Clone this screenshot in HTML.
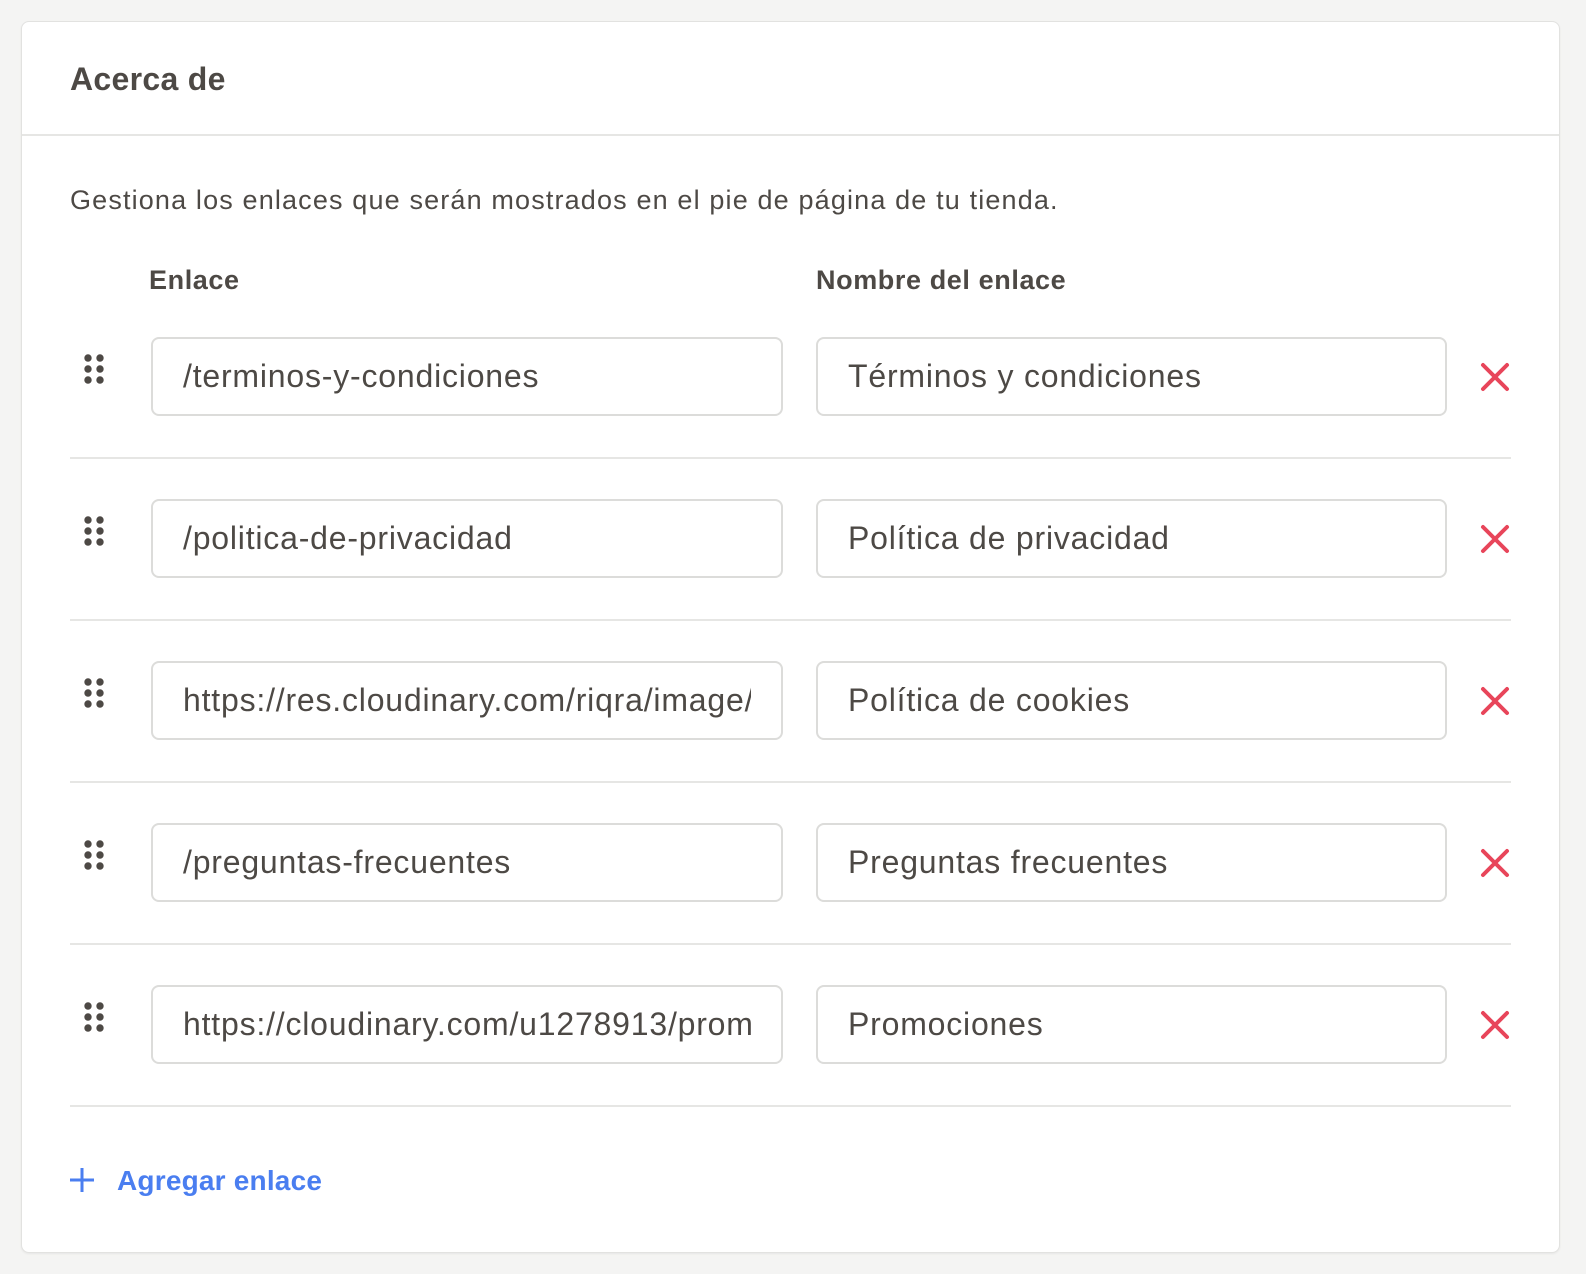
<!DOCTYPE html><html><head><style>
body{margin:0;background:#f4f4f3;font-family:"Liberation Sans",sans-serif;color:#4d4945}
.card{position:absolute;left:21px;top:21px;width:1537px;height:1230px;background:#fff;border:1px solid #e2e2e0;border-radius:8px;box-shadow:0 1px 2px rgba(0,0,0,.06)}
.h{position:absolute;left:48px;top:37px;font-size:32px;font-weight:bold;line-height:40px;letter-spacing:0.3px}
.hl{position:absolute;left:0;right:0;top:112px;border-top:2px solid #e6e6e4}
.d{position:absolute;left:48px;top:161px;font-size:27px;line-height:34px;letter-spacing:1.15px}
.lb{position:absolute;top:241px;font-size:27px;font-weight:bold;line-height:34px;letter-spacing:0.6px}
.in{position:absolute;border:2px solid #dcdcda;border-radius:8px;box-sizing:border-box;width:632px;height:79px;font-size:32px;letter-spacing:0.8px;line-height:75px;padding-left:30px;white-space:nowrap;overflow:hidden}
.in.a{left:129px}.in.b{left:794px;width:631px}
.in.a span{display:inline-block;width:568px;overflow:hidden}
.sep{position:absolute;left:48px;width:1441px;border-top:2px solid #e6e6e4}
.dr{position:absolute;left:62px}
.x{position:absolute;left:1458px}
.add{position:absolute;left:46px;top:1141px;color:#4a7ef0;font-size:28px;font-weight:bold;line-height:36px;letter-spacing:0.2px}
</style></head><body><div class="card">
<div class="h">Acerca de</div><div class="hl"></div>
<div class="d">Gestiona los enlaces que serán mostrados en el pie de página de tu tienda.</div>
<div class="lb" style="left:127px">Enlace</div><div class="lb" style="left:794px">Nombre del enlace</div>
<div id="rows"></div>
<div class="add"><svg width="28" height="28" viewBox="0 0 28 28" style="vertical-align:-4px;margin-right:21px"><path d="M14 2v24M2 14h24" stroke="#4a7ef0" stroke-width="3"/></svg>Agregar enlace</div>
</div>
<script>
var r=[["/terminos-y-condiciones","Términos y condiciones"],["/politica-de-privacidad","Política de privacidad"],["https://res.cloudinary.com/riqra/image/upload","Política de cookies"],["/preguntas-frecuentes","Preguntas frecuentes"],["https://cloudinary.com/u1278913/promociones","Promociones"]];
var h="";r.forEach(function(e,i){var t=315+162*i;
h+='<div class="in a" style="top:'+t+'px"><span>'+e[0]+'</span></div><div class="in b" style="top:'+t+'px">'+e[1]+'</div>';
h+='<svg class="dr" style="top:'+(t+17)+'px" width="24" height="34"><g fill="#4d4945"><circle cx="4" cy="4" r="3.7"/><circle cx="16" cy="4" r="3.7"/><circle cx="4" cy="15" r="3.7"/><circle cx="16" cy="15" r="3.7"/><circle cx="4" cy="26" r="3.7"/><circle cx="16" cy="26" r="3.7"/></g></svg>';
h+='<svg class="x" style="top:'+(t+25)+'px" width="30" height="30"><path d="M3 3L27 27M27 3L3 27" stroke="#e8455a" stroke-width="4" stroke-linecap="round"/></svg>';
h+='<div class="sep" style="top:'+(t+120)+'px"></div>';});
document.getElementById("rows").innerHTML=h;
</script></body></html>
